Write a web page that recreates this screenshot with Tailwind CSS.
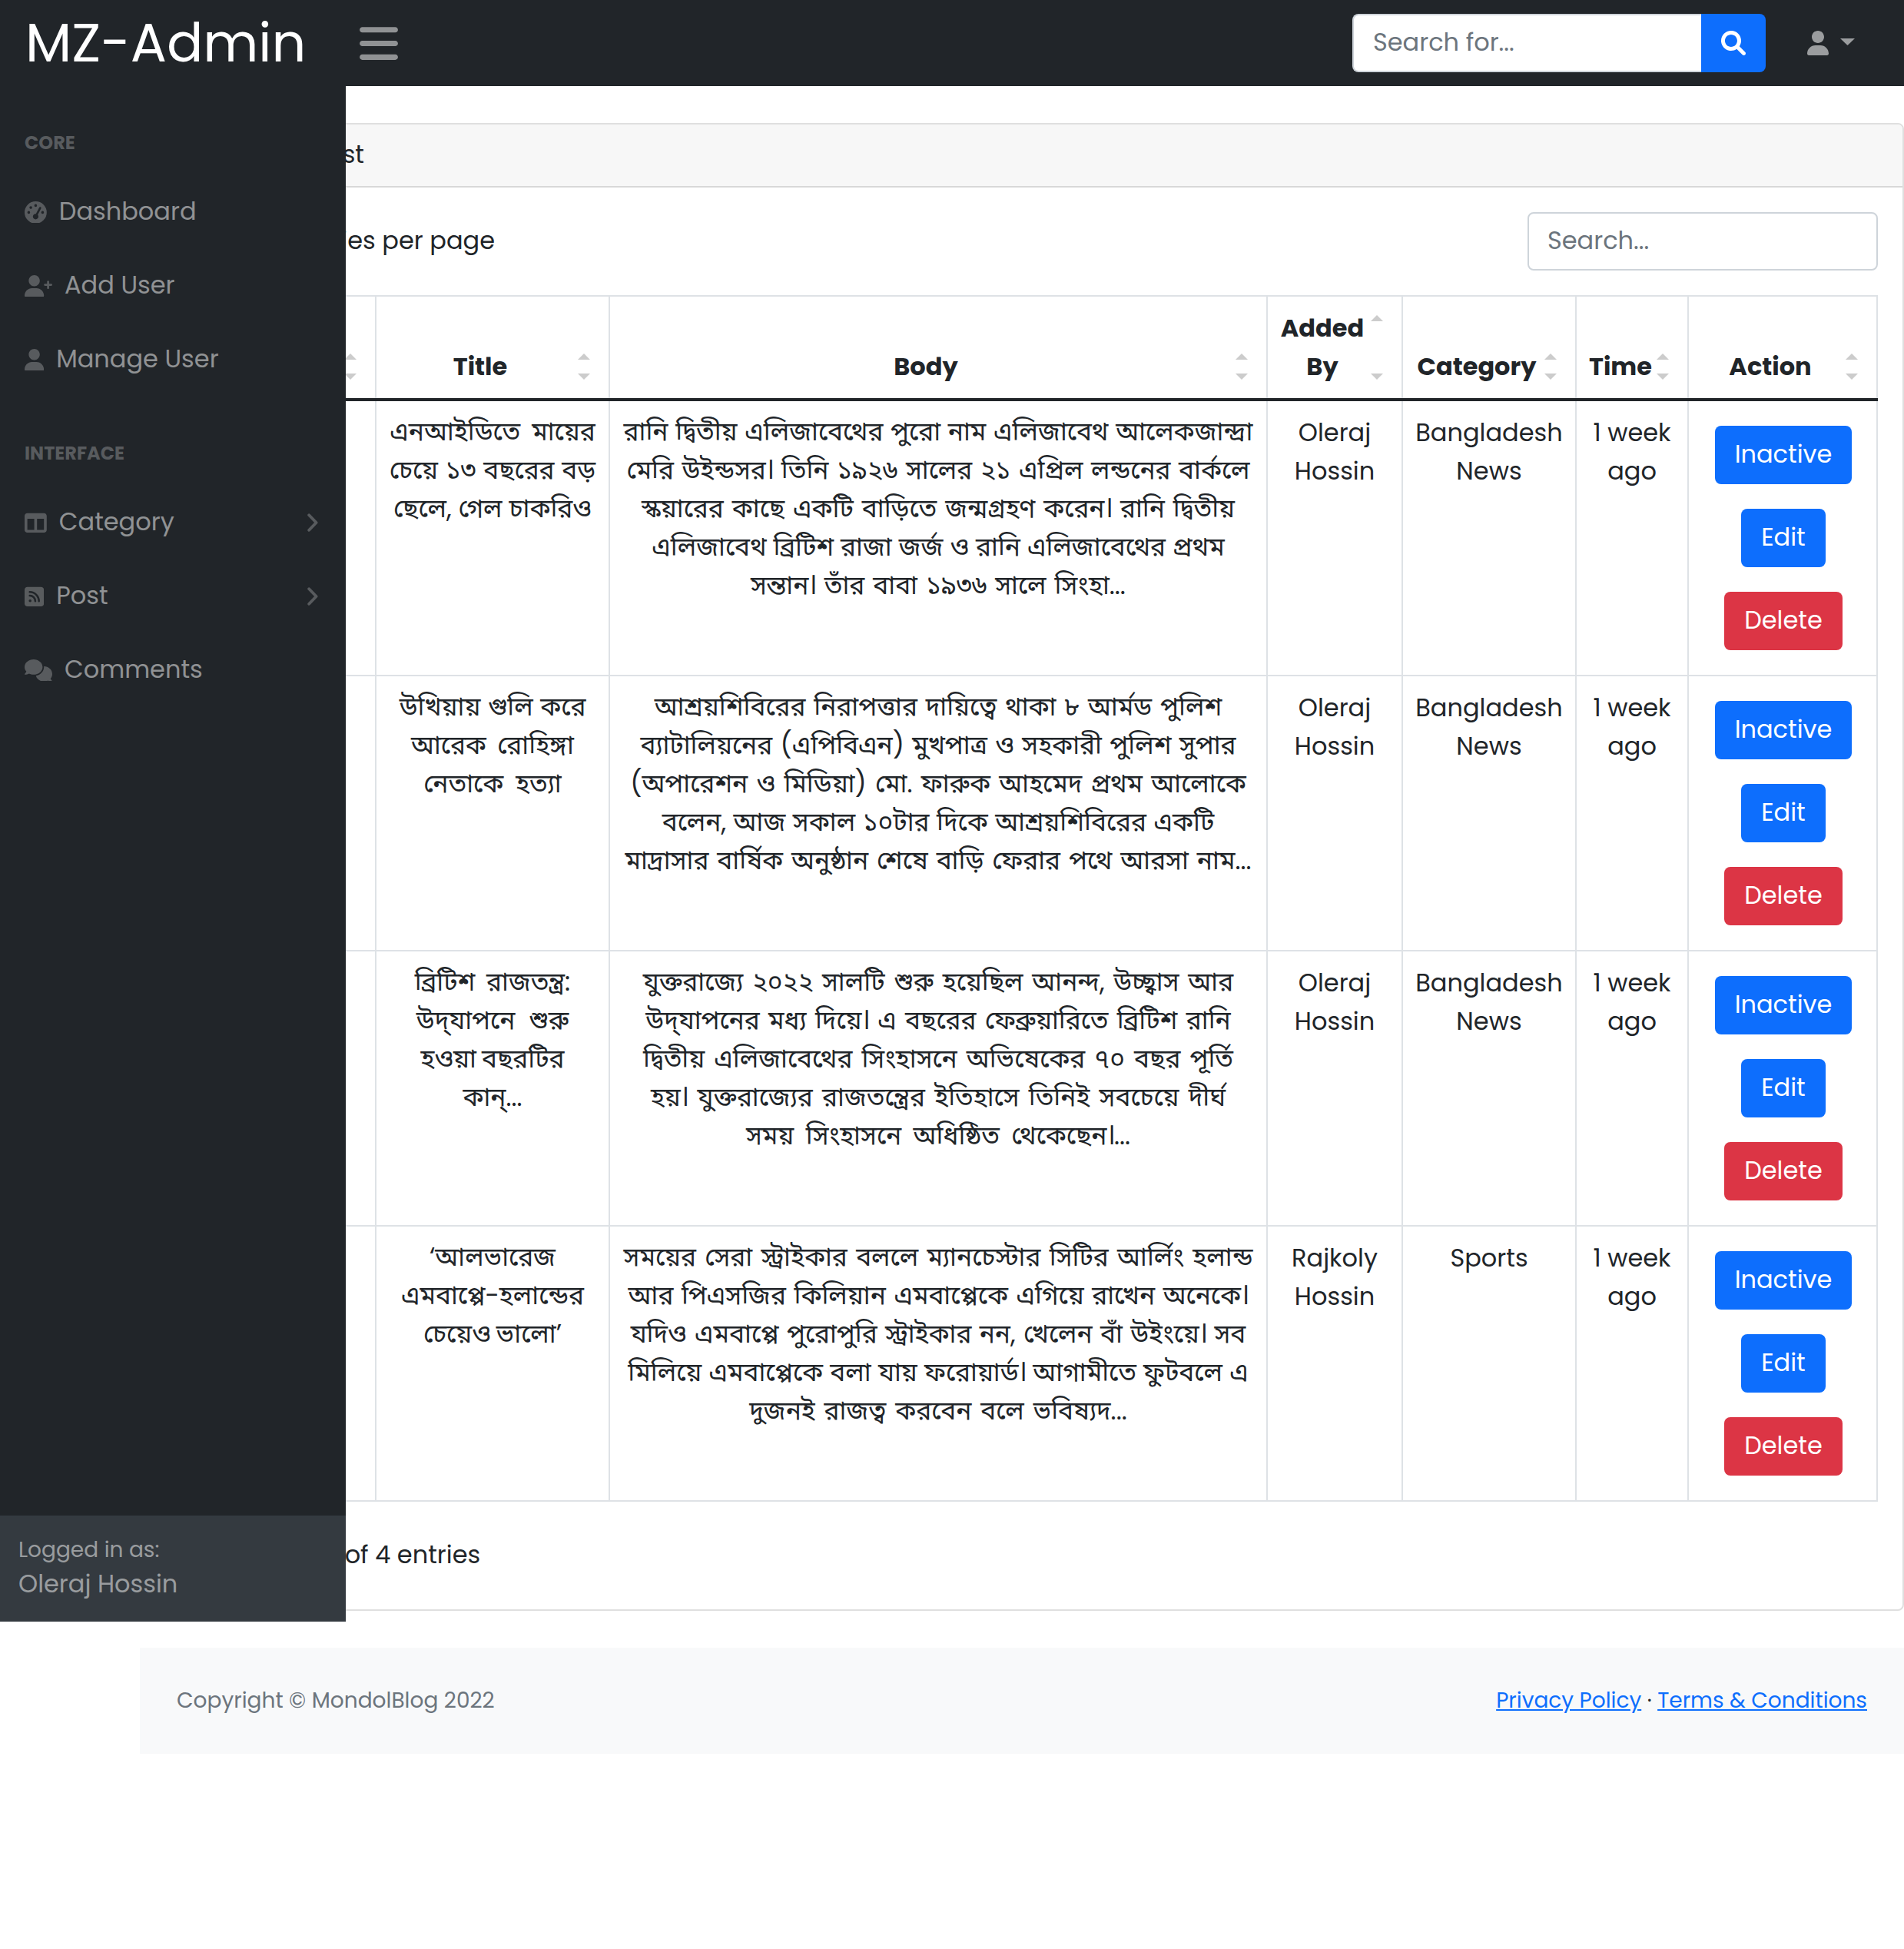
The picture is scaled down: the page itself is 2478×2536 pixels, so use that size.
<!DOCTYPE html>
<html lang="en">
<head>
<meta charset="utf-8">
<title>MZ-Admin</title>
<script src="https://cdn.jsdelivr.net/npm/@tailwindcss/browser@4"></script>
</head>
<body class="min-h-screen overflow-hidden bg-white font-['Poppins','Noto_Sans_Bengali','Inter',sans-serif] text-[32px] leading-[48px] text-[#212529]">

<svg class="hidden" aria-hidden="true">
  <symbol id="user" viewBox="0 0 448 512"><path d="M224 256c70.7 0 128-57.31 128-128S294.7 0 224 0 96 57.31 96 128s57.3 128 128 128zM274.7 304H173.3C77.61 304 0 381.6 0 477.3 0 496.5 15.52 512 34.66 512h378.7C432.5 512 448 496.5 448 477.3 448 381.6 370.4 304 274.7 304z"/></symbol>
  <symbol id="angle" viewBox="0 0 14 24"><path d="M2.2 2.2 11.6 12 2.2 21.8" fill="none" stroke="currentColor" stroke-width="3.8" stroke-linecap="round" stroke-linejoin="round"/></symbol>
  <symbol id="sort" viewBox="0 0 16 34"><path d="M8 0 16 8H0zM0 26h16l-8 8z"/></symbol>
  <symbol id="sort-tall" viewBox="0 0 16 84"><path d="M8 0 16 8H0zM0 76h16l-8 8z"/></symbol>
</svg>

<!-- Top bar -->
<nav class="flex h-28 items-center bg-[#212529]">
  <a class="w-[450px] pl-[33px] text-[70px] leading-[112px] text-white">MZ-Admin</a>
  <button class="ml-[18px] block"><svg class="h-[57px] w-[50px] fill-white/50" viewBox="0 0 448 512"><path d="M0 96C0 78.33 14.33 64 32 64h384c17.7 0 32 14.33 32 32s-14.3 32-32 32H32C14.33 128 0 113.7 0 96zM0 256c0-17.7 14.33-32 32-32h384c17.7 0 32 14.3 32 32s-14.3 32-32 32H32c-17.67 0-32-14.3-32-32zM416 448H32c-17.67 0-32-14.3-32-32s14.33-32 32-32h384c17.7 0 32 14.3 32 32s-14.3 32-32 32z"/></svg></button>
  <form class="ml-auto flex h-[76px] w-[538px]">
    <div class="flex w-[454px] items-center rounded-l-lg border-2 border-r-0 border-[#ced4da] bg-white pl-[25px] text-[#6c757d]"><span class="pb-0.5">Search for...</span></div>
    <div class="flex w-[84px] items-center justify-center rounded-r-lg bg-[#0d6efd]"><svg class="size-8 fill-white" viewBox="0 0 512 512"><path d="M500.3 443.7l-119.7-119.7c27.22-40.41 40.65-90.9 33.46-144.7C401.8 87.79 326.8 13.32 235.2 1.723C99.01-15.51-15.51 99.01 1.724 235.2c11.6 91.64 86.08 166.7 177.6 178.9c53.8 7.189 104.3-6.236 144.7-33.46l119.7 119.7c15.62 15.62 40.95 15.62 56.57 0C515.9 484.7 515.9 459.3 500.3 443.7zM79.1 208c0-70.58 57.42-128 128-128s128 57.42 128 128c0 70.58-57.42 128-128 128S79.1 278.6 79.1 208z"/></svg></div>
  </form>
  <div class="ml-[54px] flex w-[126px] items-center gap-[15px]">
    <svg class="h-8 w-7 fill-white/55"><use href="#user"/></svg>
    <svg class="-mt-1 h-[9px] w-[19px] fill-white/55" viewBox="0 0 19 9"><path d="M0 0h19l-9.5 9z"/></svg>
  </div>
</nav>

<div class="flex items-start">
  <!-- Side navigation -->
  <aside class="relative z-10 flex h-[1998px] w-[450px] shrink-0 flex-col bg-[#212529] text-white/50">
    <div class="flex-1">
      <h6 class="px-8 pt-14 pb-6 text-2xl leading-9 font-bold text-white/25">CORE</h6>
      <a class="flex h-24 items-center gap-4 px-8">
        <svg class="size-[28.8px] fill-white/25" viewBox="0 0 512 512"><path fill-rule="evenodd" d="M0 256a256 256 0 1 1 512 0 256 256 0 1 1-512 0zM320 352c0-15.9-5.8-30.4-15.3-41.6l76.6-147.4c6.1-11.8 1.5-26.3-10.2-32.4s-26.2-1.5-32.4 10.2L262.1 288.3c-2-.2-4-.3-6.1-.3-35.3 0-64 28.7-64 64s28.7 64 64 64 64-28.7 64-64zM288 96a32 32 0 1 0-64 0 32 32 0 1 0 64 0zM176 144a32 32 0 1 0-64 0 32 32 0 1 0 64 0zM128 256a32 32 0 1 0-64 0 32 32 0 1 0 64 0zM448 256a32 32 0 1 0-64 0 32 32 0 1 0 64 0z"/></svg>
        <span class="pb-0.5">Dashboard</span>
      </a>
      <a class="flex h-24 items-center gap-4 px-8">
        <svg class="h-[28.8px] w-9 fill-white/25" viewBox="0 0 640 512"><path d="M224 256c70.7 0 128-57.31 128-128S294.7 0 224 0 96 57.31 96 128s57.3 128 128 128zM274.7 304H173.3C77.61 304 0 381.6 0 477.3 0 496.5 15.52 512 34.66 512h378.7C432.5 512 448 496.5 448 477.3 448 381.6 370.4 304 274.7 304zM616 200h-48v-48c0-13.2-10.7-24-24-24s-24 10.75-24 24v48h-48c-13.2 0-24 10.8-24 24s10.75 24 24 24h48v48c0 13.3 10.8 24 24 24s24-10.75 24-24v-48h48c13.3 0 24-10.7 24-24s-10.7-24-24-24z"/></svg>
        <span class="pb-0.5">Add User</span>
      </a>
      <a class="flex h-24 items-center gap-4 px-8">
        <svg class="h-[28.8px] w-[25.2px] fill-white/25"><use href="#user"/></svg>
        <span class="pb-0.5">Manage User</span>
      </a>
      <h6 class="px-8 pt-14 pb-6 text-2xl leading-9 font-bold text-white/25">INTERFACE</h6>
      <a class="flex h-24 items-center gap-4 px-8">
        <svg class="size-[28.8px] fill-white/25" viewBox="0 0 512 512"><path fill-rule="evenodd" d="M0 96c0-35.35 28.65-64 64-64h384c35.3 0 64 28.65 64 64v320c0 35.3-28.7 64-64 64H64c-35.35 0-64-28.7-64-64V96zm64 320h160V160H64v256zm384-256H288v256h160V160z"/></svg>
        <span class="pb-0.5">Category</span>
        <svg class="mr-1 ml-auto h-6 w-3.5 text-white/25"><use href="#angle"/></svg>
      </a>
      <a class="flex h-24 items-center gap-4 px-8">
        <svg class="h-[28.8px] w-[25.2px]" viewBox="0 0 448 512"><path class="fill-[#595c5e]" d="M384 32H64C28.65 32 0 60.65 0 96v320c0 35.3 28.65 64 64 64h320c35.3 0 64-28.7 64-64V96c0-35.35-28.7-64-64-64z"/><circle class="fill-[#212529]" cx="128" cy="352" r="32"/><path class="fill-none stroke-[#212529]" stroke-width="46" stroke-linecap="round" d="M120 232a128 128 0 0 1 128 128M120 148a212 212 0 0 1 212 212"/></svg>
        <span class="pb-0.5">Post</span>
        <svg class="mr-1 ml-auto h-6 w-3.5 text-white/25"><use href="#angle"/></svg>
      </a>
      <a class="flex h-24 items-center gap-4 px-8">
        <svg class="h-[28.8px] w-9 fill-white/25" viewBox="0 0 640 512"><path d="M416 176C416 78.8 322.9 0 208 0S0 78.8 0 176c0 39.57 15.62 75.96 41.67 105.4c-16.39 32.76-39.23 57.32-39.59 57.68c-2.1 2.205-2.67 5.475-1.441 8.354C1.9 350.3 4.602 352 7.66 352c38.35 0 70.76-11.12 95.74-24.04C134.2 343.1 169.8 352 208 352C322.9 352 416 273.2 416 176zM599.6 443.7C624.8 413.9 640 376.6 640 336C640 238.8 554 160 448 160c-.3145 0-.6191 .041-.9336 .043C447.5 165.3 448 170.6 448 176c0 98.62-79.68 181.2-186.1 202.5C282.7 455.1 357.1 512 448 512c33.69 0 65.32-8.008 92.85-21.98C565.2 502 596.1 512 632.3 512c3.059 0 5.76-1.725 7.02-4.605c1.229-2.879 .6582-6.148-1.441-8.354C637.6 498.7 615.9 475.3 599.6 443.7z"/></svg>
        <span class="pb-0.5">Comments</span>
      </a>
    </div>
    <div class="h-[138px] bg-[#343a40] px-6 pt-6">
      <div class="text-[28px] leading-[42px]">Logged in as:</div>
      <div class="-mt-px">Oleraj Hossin</div>
    </div>
  </aside>

  <!-- Page content; its left part slides under the side navigation -->
  <div class="-ml-[268px] w-[2296px] shrink-0 pt-12">
    <main class="h-[1936px] rounded-lg border-2 border-[#dfdfdf]">
      <div class="h-[82px] rounded-t-md border-b-2 border-[#d8d8d8] bg-[#f7f7f7] pt-[15px]"><div class="w-[290px] text-right">Post List</div></div>
      <div class="px-8 pt-8">
        <div class="flex h-[76px] items-center justify-between">
          <div class="w-[428px] pb-0.5 text-right whitespace-nowrap">entries per page</div>
          <div class="flex h-[76px] w-[456px] items-center rounded-lg border-2 border-[#ced4da] pl-6 text-[#6c757d]"><span class="pb-0.5">Search...</span></div>
        </div>

        <table class="mt-8 w-[2228px] table-fixed border-separate border-spacing-0 border-t-2 border-l-2 border-[#dee2e6] text-center leading-[50px]">
          <colgroup><col class="w-[272px]"><col class="w-[304px]"><col class="w-[856px]"><col class="w-[176px]"><col class="w-[226px]"><col class="w-[146px]"><col class="w-[246px]"></colgroup>
          <thead>
            <tr class="h-[132px] align-bottom font-bold *:relative *:border-r-2 *:border-[#dee2e6] *:pt-4 *:pr-12 *:pb-4 *:pl-4">
              <th><svg class="absolute right-6 bottom-6 h-[34px] w-4 fill-[#ccc]"><use href="#sort"/></svg></th>
              <th>Title<svg class="absolute right-6 bottom-6 h-[34px] w-4 fill-[#ccc]"><use href="#sort"/></svg></th>
              <th>Body<svg class="absolute right-6 bottom-6 h-[34px] w-4 fill-[#ccc]"><use href="#sort"/></svg></th>
              <th>Added<br>By<svg class="absolute right-6 bottom-6 h-[84px] w-4 fill-[#ccc]"><use href="#sort-tall"/></svg></th>
              <th>Category<svg class="absolute right-6 bottom-6 h-[34px] w-4 fill-[#ccc]"><use href="#sort"/></svg></th>
              <th>Time<svg class="absolute right-6 bottom-6 h-[34px] w-4 fill-[#ccc]"><use href="#sort"/></svg></th>
              <th>Action<svg class="absolute right-6 bottom-6 h-[34px] w-4 fill-[#ccc]"><use href="#sort"/></svg></th>
            </tr>
            <tr class="h-1"><td colspan="7" class="bg-[#212529] p-0"></td></tr>
          </thead>
          <tbody class="align-top">
            <tr class="h-[358px] *:border-r-2 *:border-b-2 *:border-[#dee2e6] *:py-4">
              <td></td>
              <td lang="bn" class="text-[33.5px] whitespace-nowrap"><div class="-mt-px"><p class="[word-spacing:6px]">এনআইডিতে মায়ের</p><p class="[word-spacing:0.8px]">চেয়ে ১৩ বছরের বড়</p><p>ছেলে, গেল চাকরিও</p></div></td>
              <td lang="bn" class="text-[33.5px] whitespace-nowrap"><div class="-mt-px"><p class="[word-spacing:0.8px]">রানি দ্বিতীয় এলিজাবেথের পুরো নাম এলিজাবেথ আলেকজান্দ্রা</p><p class="[word-spacing:1.6px]">মেরি উইন্ডসর। তিনি ১৯২৬ সালের ২১ এপ্রিল লন্ডনের বার্কলে</p><p class="[word-spacing:2px]">স্কয়ারের কাছে একটি বাড়িতে জন্মগ্রহণ করেন। রানি দ্বিতীয়</p><p>এলিজাবেথ ব্রিটিশ রাজা জর্জ ও রানি এলিজাবেথের প্রথম</p><p class="[word-spacing:2px]">সন্তান। তাঁর বাবা ১৯৩৬ সালে সিংহা...</p></div></td>
              <td>Oleraj<br>Hossin</td><td>Bangladesh<br>News</td><td>1 week<br>ago</td>
              <td><div class="flex flex-col items-center gap-8 pt-4 pl-0.5 leading-[74px] text-white *:rounded-lg *:px-[26px] *:pb-0.5"><a class="bg-[#0d6efd]">Inactive</a><a class="bg-[#0d6efd]">Edit</a><a class="bg-[#dc3545]">Delete</a></div></td>
            </tr>
            <tr class="h-[358px] *:border-r-2 *:border-b-2 *:border-[#dee2e6] *:py-4">
              <td></td>
              <td lang="bn" class="text-[33.5px] whitespace-nowrap"><div class="-mt-px"><p class="[word-spacing:0.6px]">উখিয়ায় গুলি করে</p><p class="[word-spacing:5.4px]">আরেক রোহিঙ্গা</p><p class="[word-spacing:7px]">নেতাকে হত্যা</p></div></td>
              <td lang="bn" class="text-[33.5px] whitespace-nowrap"><div class="-mt-px"><p class="[word-spacing:1.9px]">আশ্রয়শিবিরের নিরাপত্তার দায়িত্বে থাকা ৮ আর্মড পুলিশ</p><p class="[word-spacing:1.4px]">ব্যাটালিয়নের (এপিবিএন) মুখপাত্র ও সহকারী পুলিশ সুপার</p><p class="[word-spacing:2.3px]">(অপারেশন ও মিডিয়া) মো. ফারুক আহমেদ প্রথম আলোকে</p><p class="[word-spacing:0.6px]">বলেন, আজ সকাল ১০টার দিকে আশ্রয়শিবিরের একটি</p><p class="[word-spacing:2px]">মাদ্রাসার বার্ষিক অনুষ্ঠান শেষে বাড়ি ফেরার পথে আরসা নাম...</p></div></td>
              <td>Oleraj<br>Hossin</td><td>Bangladesh<br>News</td><td>1 week<br>ago</td>
              <td><div class="flex flex-col items-center gap-8 pt-4 pl-0.5 leading-[74px] text-white *:rounded-lg *:px-[26px] *:pb-0.5"><a class="bg-[#0d6efd]">Inactive</a><a class="bg-[#0d6efd]">Edit</a><a class="bg-[#dc3545]">Delete</a></div></td>
            </tr>
            <tr class="h-[358px] *:border-r-2 *:border-b-2 *:border-[#dee2e6] *:py-4">
              <td></td>
              <td lang="bn" class="text-[33.5px] whitespace-nowrap"><div class="-mt-px"><p class="[word-spacing:5.7px]">ব্রিটিশ রাজতন্ত্র:</p><p class="[word-spacing:9px]">উদ্‌যাপনে শুরু</p><p class="[word-spacing:-2px]">হওয়া বছরটির</p><p>কান্...</p></div></td>
              <td lang="bn" class="text-[33.5px] whitespace-nowrap"><div class="-mt-px"><p class="[word-spacing:2.8px]">যুক্তরাজ্যে ২০২২ সালটি শুরু হয়েছিল আনন্দ, উচ্ছ্বাস আর</p><p class="[word-spacing:2.4px]">উদ্‌যাপনের মধ্য দিয়ে। এ বছরের ফেব্রুয়ারিতে ব্রিটিশ রানি</p><p class="[word-spacing:3.1px]">দ্বিতীয় এলিজাবেথের সিংহাসনে অভিষেকের ৭০ বছর পূর্তি</p><p class="[word-spacing:3.3px]">হয়। যুক্তরাজ্যের রাজতন্ত্রের ইতিহাসে তিনিই সবচেয়ে দীর্ঘ</p><p class="[word-spacing:6.5px]">সময় সিংহাসনে অধিষ্ঠিত থেকেছেন।...</p></div></td>
              <td>Oleraj<br>Hossin</td><td>Bangladesh<br>News</td><td>1 week<br>ago</td>
              <td><div class="flex flex-col items-center gap-8 pt-4 pl-0.5 leading-[74px] text-white *:rounded-lg *:px-[26px] *:pb-0.5"><a class="bg-[#0d6efd]">Inactive</a><a class="bg-[#0d6efd]">Edit</a><a class="bg-[#dc3545]">Delete</a></div></td>
            </tr>
            <tr class="h-[358px] *:border-r-2 *:border-b-2 *:border-[#dee2e6] *:py-4">
              <td></td>
              <td lang="bn" class="text-[33.5px] whitespace-nowrap"><div class="-mt-px"><p>‘আলভারেজ</p><p>এমবাপ্পে-হলান্ডের</p><p class="[word-spacing:-2px]">চেয়েও ভালো’</p></div></td>
              <td lang="bn" class="text-[33.5px] whitespace-nowrap"><div class="-mt-px"><p class="[word-spacing:2.4px]">সময়ের সেরা স্ট্রাইকার বললে ম্যানচেস্টার সিটির আর্লিং হলান্ড</p><p class="[word-spacing:1.6px]">আর পিএসজির কিলিয়ান এমবাপ্পেকে এগিয়ে রাখেন অনেকে।</p><p class="[word-spacing:1.4px]">যদিও এমবাপ্পে পুরোপুরি স্ট্রাইকার নন, খেলেন বাঁ উইংয়ে। সব</p><p class="[word-spacing:0.3px]">মিলিয়ে এমবাপ্পেকে বলা যায় ফরোয়ার্ড। আগামীতে ফুটবলে এ</p><p class="[word-spacing:2.9px]">দুজনই রাজত্ব করবেন বলে ভবিষ্যদ...</p></div></td>
              <td>Rajkoly<br>Hossin</td><td>Sports</td><td>1 week<br>ago</td>
              <td><div class="flex flex-col items-center gap-8 pt-4 pl-0.5 leading-[74px] text-white *:rounded-lg *:px-[26px] *:pb-0.5"><a class="bg-[#0d6efd]">Inactive</a><a class="bg-[#0d6efd]">Edit</a><a class="bg-[#dc3545]">Delete</a></div></td>
            </tr>
          </tbody>
        </table>
        <div class="mt-[45px] w-[408px] text-right whitespace-nowrap">Showing 1 to 4 of 4 entries</div>
      </div>
    </main>
    <footer class="mt-12 flex h-[138px] items-center justify-between bg-[#f8f9fa] px-12 text-[28px] leading-[42px]">
      <div class="text-[#6c757d]">Copyright © MondolBlog 2022</div>
      <div><a class="text-[#0d6efd] underline">Privacy Policy</a> · <a class="text-[#0d6efd] underline">Terms &amp; Conditions</a></div>
    </footer>
  </div>
</div>
</body>
</html>
